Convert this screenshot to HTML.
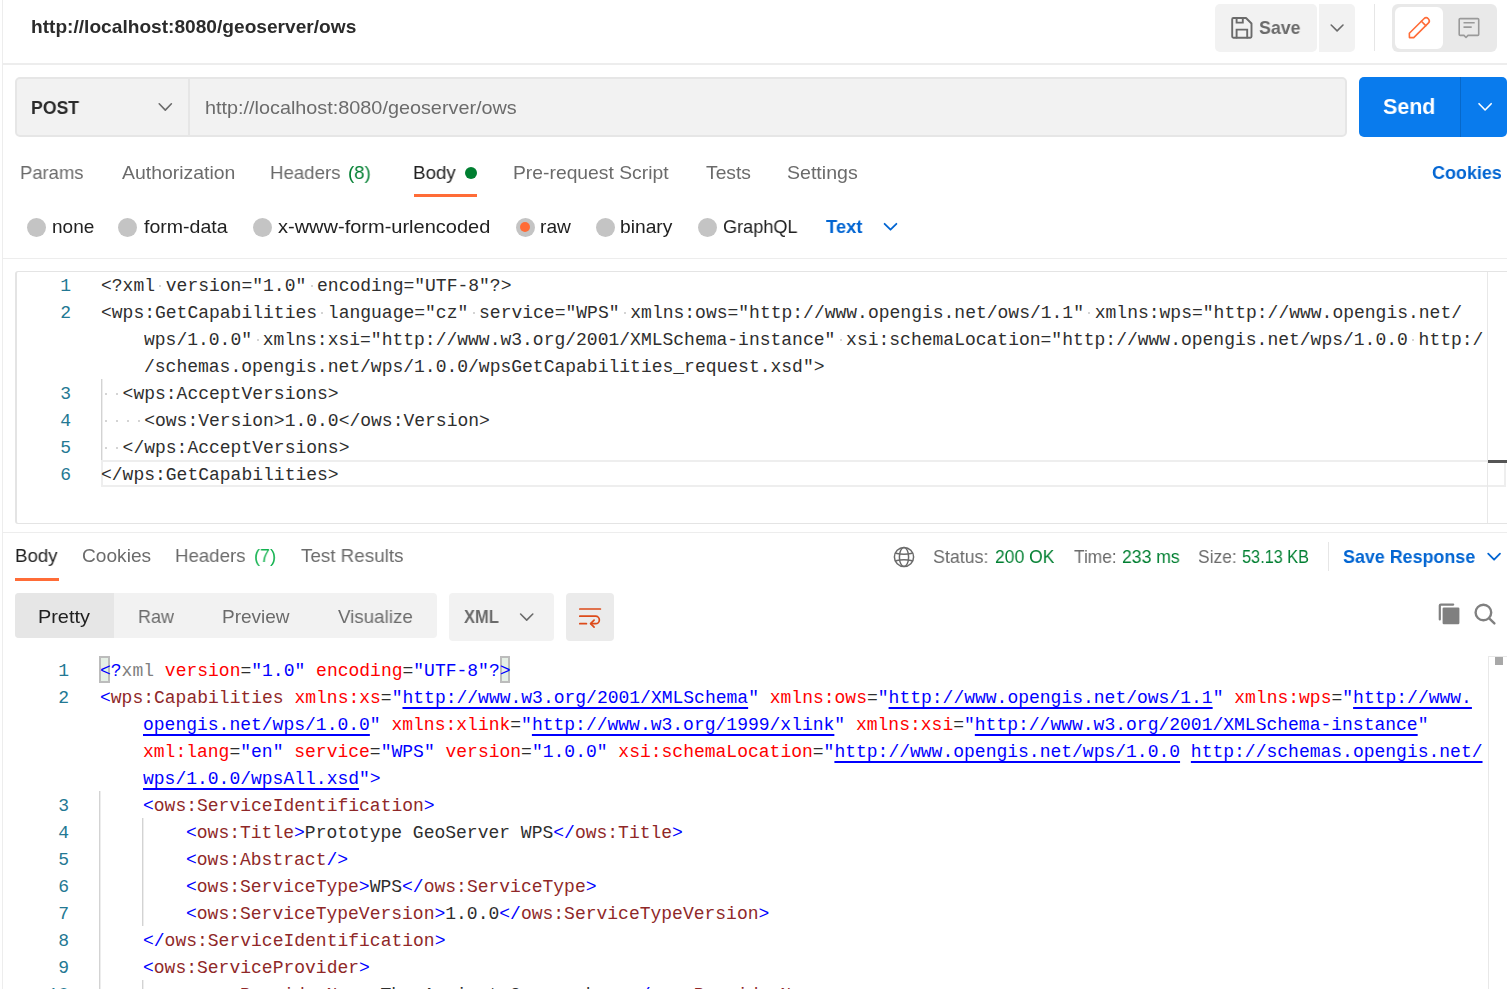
<!DOCTYPE html>
<html><head><meta charset="utf-8">
<style>
*{box-sizing:border-box;margin:0;padding:0}
html,body{width:1507px;height:989px;overflow:hidden;background:#fff}
body{position:relative;font-family:"Liberation Sans",sans-serif;color:#212121}
.a{position:absolute;white-space:pre;transform-origin:0 0}
.ln{position:absolute;height:1px;background:#ededed}
.vl{position:absolute;width:1px;background:#ededed}
.t{font-size:19px;line-height:24px;will-change:transform}
.g{color:#6b6b6b}
.grn{color:#007f31}
.blue{color:#0265d2}
.w{color:#fff}
.dk{color:#2b2b2b}
.grn2{color:#12b24f}
.code{font-family:"Liberation Mono",monospace;font-size:19px;line-height:27px}
.req,.res{transform:scaleX(0.947368)}
.lnum{color:#237893;transform:scaleX(0.947368);transform-origin:100% 0}
.req{color:#2e2e2e}
.dot{position:absolute;width:2px;height:2px;background:#d4d4d4}
.d{color:#0000ff}.tg{color:#8f2828}.at{color:#ff0000}.eq{color:#2e2e2e}.v{color:#0000ff}.lk{color:#0000ff;text-decoration:underline;text-underline-offset:4px;text-decoration-thickness:1.5px;text-decoration-skip-ink:none}.mt{color:#808080}.tx{color:#2e2e2e}
.guide{width:2px;background:linear-gradient(90deg,#d3d3d3 50%,#ededed 50%)}
.bm{border:2px solid #bcbcbc;background:#e6f0e6}
.radio{position:absolute;width:19.5px;height:19.5px;border-radius:50%;background:#c4c4c4}
</style></head><body>
<div class="vl" style="left:2px;top:0;height:989px"></div>

<!-- header -->
<div class="ln" style="left:3px;top:63px;width:1504px;height:2px"></div>

<!-- Save -->
<div class="a" style="left:1215px;top:4px;width:102px;height:48px;background:#f2f2f2;border-radius:5px"></div>
<div class="a" style="left:1319px;top:4px;width:36px;height:48px;background:#f2f2f2;border-radius:0 5px 5px 0"></div>
<div class="vl" style="left:1374px;top:4px;height:47px;background:#e6e6e6"></div>
<div class="a" style="left:1392px;top:4px;width:105px;height:48px;background:#e9e9e9;border-radius:6px"></div>
<div class="a" style="left:1395px;top:7px;width:48px;height:42px;background:#fff;border-radius:6px"></div>

<!-- URL bar -->
<div class="a" style="left:15px;top:77px;width:1332px;height:60px;background:#f2f2f2;border:2px solid #e6e6e6;border-radius:5px"></div>
<div class="vl" style="left:188px;top:78px;height:58px;width:2px;background:#e6e6e6"></div>
<div class="a" style="left:1359px;top:77px;width:148px;height:60px;background:#097bed;border-radius:5px"></div>
<div class="vl" style="left:1460px;top:77px;height:60px;background:#0768c9"></div>

<!-- tabs -->
<div class="a" style="left:465px;top:167px;width:12px;height:12px;border-radius:50%;background:#007f31"></div>
<div class="a" style="left:414px;top:194px;width:63px;height:3px;background:#ff6c37"></div>

<!-- radios -->
<div class="radio" style="left:26.5px;top:217.5px"></div>
<div class="radio" style="left:117.5px;top:217.5px"></div>
<div class="radio" style="left:252.5px;top:217.5px"></div>
<div class="radio" style="left:515.5px;top:217.5px"></div>
<div class="a" style="left:520px;top:222.3px;width:10px;height:10px;border-radius:50%;background:#ff6c37"></div>
<div class="radio" style="left:595.5px;top:217.5px"></div>
<div class="radio" style="left:697.5px;top:217.5px"></div>
<div class="ln" style="left:3px;top:258px;width:1504px"></div>

<!-- request editor -->
<div class="a" style="left:15px;top:271px;width:1500px;height:253px;border:1px solid #e4e4e4;border-left:2px solid #e4e4e4;border-radius:3px"></div>

<!-- reqcode:start -->
<div class="a" style="left:101px;top:460px;width:1405px;height:27px;border:2px solid #eeeeee"></div>
<div class="vl" style="left:1487px;top:272px;height:251px;background:#e8e8e8"></div>
<div class="a" style="left:1488px;top:460px;width:19px;height:3px;background:#555"></div>
<div class="a guide" style="left:101px;top:379px;height:81px"></div>
<div class="a code lnum" style="left:0;width:71px;text-align:right;top:273px">1</div>
<div class="dot" style="left:159.4px;top:285px"></div>
<div class="dot" style="left:310.6px;top:285px"></div>
<div class="a code req" style="left:101.0px;top:273px">&lt;?xml version="1.0" encoding="UTF-8"?&gt;</div>
<div class="a code lnum" style="left:0;width:71px;text-align:right;top:300px">2</div>
<div class="dot" style="left:321.4px;top:312px"></div>
<div class="dot" style="left:472.6px;top:312px"></div>
<div class="dot" style="left:623.8px;top:312px"></div>
<div class="dot" style="left:1088.2px;top:312px"></div>
<div class="a code req" style="left:101.0px;top:300px">&lt;wps:GetCapabilities language="cz" service="WPS" xmlns:ows="http://www.opengis.net/ows/1.1" xmlns:wps="http://www.opengis.net/</div>
<div class="dot" style="left:256.6px;top:339px"></div>
<div class="dot" style="left:839.8px;top:339px"></div>
<div class="dot" style="left:1412.2px;top:339px"></div>
<div class="a code req" style="left:144.2px;top:327px">wps/1.0.0" xmlns:xsi="http://www.w3.org/2001/XMLSchema-instance" xsi:schemaLocation="http://www.opengis.net/wps/1.0.0 http:/</div>
<div class="a code req" style="left:144.2px;top:354px">/schemas.opengis.net/wps/1.0.0/wpsGetCapabilities_request.xsd"&gt;</div>
<div class="a code lnum" style="left:0;width:71px;text-align:right;top:381px">3</div>
<div class="dot" style="left:105.4px;top:393px"></div>
<div class="dot" style="left:116.2px;top:393px"></div>
<div class="a code req" style="left:101.0px;top:381px">  &lt;wps:AcceptVersions&gt;</div>
<div class="a code lnum" style="left:0;width:71px;text-align:right;top:408px">4</div>
<div class="dot" style="left:105.4px;top:420px"></div>
<div class="dot" style="left:116.2px;top:420px"></div>
<div class="dot" style="left:127.0px;top:420px"></div>
<div class="dot" style="left:137.8px;top:420px"></div>
<div class="a code req" style="left:101.0px;top:408px">    &lt;ows:Version&gt;1.0.0&lt;/ows:Version&gt;</div>
<div class="a code lnum" style="left:0;width:71px;text-align:right;top:435px">5</div>
<div class="dot" style="left:105.4px;top:447px"></div>
<div class="dot" style="left:116.2px;top:447px"></div>
<div class="a code req" style="left:101.0px;top:435px">  &lt;/wps:AcceptVersions&gt;</div>
<div class="a code lnum" style="left:0;width:71px;text-align:right;top:462px">6</div>
<div class="a code req" style="left:101.0px;top:462px">&lt;/wps:GetCapabilities&gt;</div>
<!-- reqcode:end -->

<!-- response header -->
<div class="ln" style="left:3px;top:532px;width:1504px"></div>
<div class="a" style="left:15px;top:578px;width:44px;height:3px;background:#ff6c37"></div>

<div class="vl" style="left:1328px;top:542px;height:29px;background:#e6e6e6"></div>

<!-- response toolbar -->
<div class="a" style="left:15px;top:593px;width:422px;height:45px;background:#f2f2f2;border-radius:4px"></div>
<div class="a" style="left:15px;top:593px;width:99px;height:45px;background:#e6e6e6;border-radius:4px 0 0 4px"></div>
<div class="a" style="left:449px;top:593px;width:105px;height:48px;background:#f2f2f2;border-radius:4px"></div>
<div class="a" style="left:566px;top:593px;width:48px;height:48px;background:#ebebeb;border-radius:4px"></div>

<!-- rescode:start -->
<div class="vl" style="left:1488px;top:656px;height:333px;background:#e8e8e8"></div>
<div class="ln" style="left:1488px;top:656px;width:19px;background:#e8e8e8"></div>
<div class="a" style="left:1495px;top:657px;width:8px;height:8px;background:#a8a8a8"></div>
<div class="a bm" style="left:99px;top:656px;width:11px;height:27px"></div>
<div class="a bm" style="left:500px;top:656px;width:10px;height:27px"></div>
<div class="a guide" style="left:99px;top:791px;height:217px"></div>
<div class="a guide" style="left:142px;top:818px;height:108px"></div>
<div class="a guide" style="left:142px;top:980px;height:28px"></div>
<div class="a code lnum" style="left:0;width:69px;text-align:right;top:658px">1</div>
<div class="a code res" style="left:100.0px;top:658px"><span class="d">&lt;?</span><span class="mt">xml</span><span class="eq"> </span><span class="at">version</span><span class="eq">=</span><span class="v">"1.0"</span><span class="eq"> </span><span class="at">encoding</span><span class="eq">=</span><span class="v">"UTF-8"</span><span class="d">?&gt;</span></div>
<div class="a code lnum" style="left:0;width:69px;text-align:right;top:685px">2</div>
<div class="a code res" style="left:100.0px;top:685px"><span class="d">&lt;</span><span class="tg">wps:Capabilities</span><span class="eq"> </span><span class="at">xmlns:xs</span><span class="eq">=</span><span class="v">"</span><span class="lk">http://www.w3.org/2001/XMLSchema</span><span class="v">"</span><span class="eq"> </span><span class="at">xmlns:ows</span><span class="eq">=</span><span class="v">"</span><span class="lk">http://www.opengis.net/ows/1.1</span><span class="v">"</span><span class="eq"> </span><span class="at">xmlns:wps</span><span class="eq">=</span><span class="v">"</span><span class="lk">http://www.</span></div>
<div class="a code res" style="left:143.2px;top:712px"><span class="lk">opengis.net/wps/1.0.0</span><span class="v">"</span><span class="eq"> </span><span class="at">xmlns:xlink</span><span class="eq">=</span><span class="v">"</span><span class="lk">http://www.w3.org/1999/xlink</span><span class="v">"</span><span class="eq"> </span><span class="at">xmlns:xsi</span><span class="eq">=</span><span class="v">"</span><span class="lk">http://www.w3.org/2001/XMLSchema-instance</span><span class="v">"</span></div>
<div class="a code res" style="left:143.2px;top:739px"><span class="at">xml:lang</span><span class="eq">=</span><span class="v">"en"</span><span class="eq"> </span><span class="at">service</span><span class="eq">=</span><span class="v">"WPS"</span><span class="eq"> </span><span class="at">version</span><span class="eq">=</span><span class="v">"1.0.0"</span><span class="eq"> </span><span class="at">xsi:schemaLocation</span><span class="eq">=</span><span class="v">"</span><span class="lk">http://www.opengis.net/wps/1.0.0</span><span class="v"> </span><span class="lk">http://schemas.opengis.net/</span></div>
<div class="a code res" style="left:143.2px;top:766px"><span class="lk">wps/1.0.0/wpsAll.xsd</span><span class="v">"</span><span class="d">&gt;</span></div>
<div class="a code lnum" style="left:0;width:69px;text-align:right;top:793px">3</div>
<div class="a code res" style="left:143.2px;top:793px"><span class="d">&lt;</span><span class="tg">ows:ServiceIdentification</span><span class="d">&gt;</span></div>
<div class="a code lnum" style="left:0;width:69px;text-align:right;top:820px">4</div>
<div class="a code res" style="left:186.4px;top:820px"><span class="d">&lt;</span><span class="tg">ows:Title</span><span class="d">&gt;</span><span class="tx">Prototype GeoServer WPS</span><span class="d">&lt;/</span><span class="tg">ows:Title</span><span class="d">&gt;</span></div>
<div class="a code lnum" style="left:0;width:69px;text-align:right;top:847px">5</div>
<div class="a code res" style="left:186.4px;top:847px"><span class="d">&lt;</span><span class="tg">ows:Abstract</span><span class="d">/&gt;</span></div>
<div class="a code lnum" style="left:0;width:69px;text-align:right;top:874px">6</div>
<div class="a code res" style="left:186.4px;top:874px"><span class="d">&lt;</span><span class="tg">ows:ServiceType</span><span class="d">&gt;</span><span class="tx">WPS</span><span class="d">&lt;/</span><span class="tg">ows:ServiceType</span><span class="d">&gt;</span></div>
<div class="a code lnum" style="left:0;width:69px;text-align:right;top:901px">7</div>
<div class="a code res" style="left:186.4px;top:901px"><span class="d">&lt;</span><span class="tg">ows:ServiceTypeVersion</span><span class="d">&gt;</span><span class="tx">1.0.0</span><span class="d">&lt;/</span><span class="tg">ows:ServiceTypeVersion</span><span class="d">&gt;</span></div>
<div class="a code lnum" style="left:0;width:69px;text-align:right;top:928px">8</div>
<div class="a code res" style="left:143.2px;top:928px"><span class="d">&lt;/</span><span class="tg">ows:ServiceIdentification</span><span class="d">&gt;</span></div>
<div class="a code lnum" style="left:0;width:69px;text-align:right;top:955px">9</div>
<div class="a code res" style="left:143.2px;top:955px"><span class="d">&lt;</span><span class="tg">ows:ServiceProvider</span><span class="d">&gt;</span></div>
<div class="a code lnum" style="left:0;width:69px;text-align:right;top:982px">10</div>
<div class="a code res" style="left:186.4px;top:982px"><span class="d">&lt;</span><span class="tg">ows:ProviderName</span><span class="d">&gt;</span><span class="tx">The Ancient Geographers</span><span class="d">&lt;/</span><span class="tg">ows:ProviderName</span><span class="d">&gt;</span></div>
<!-- rescode:end -->

<!-- icons:start -->
<svg class="a" style="left:0;top:0" width="1507" height="989" viewBox="0 0 1507 989" fill="none" stroke-linecap="round" stroke-linejoin="round">
 <!-- floppy -->
 <path d="M1232.2 19.2a1.2 1.2 0 0 1 1.2-1.2h12.6l5.5 5.5v13a1.2 1.2 0 0 1-1.2 1.2h-16.9a1.2 1.2 0 0 1-1.2-1.2z" stroke="#6b6b6b" stroke-width="1.9"/>
 <path d="M1236.6 18v4.6h6.2v-4.6" stroke="#6b6b6b" stroke-width="1.9" stroke-linejoin="miter"/>
 <path d="M1236.6 37.6v-8h10.6v8" stroke="#6b6b6b" stroke-width="1.9" stroke-linejoin="miter"/>
 <!-- save chevron -->
 <path d="M1331.2 25l5.9 5.9 5.9-5.9" stroke="#6b6b6b" stroke-width="1.6"/>
 <!-- pencil -->
 <g transform="translate(1409 38) rotate(-45)" stroke="#ff6c37" stroke-width="1.6">
  <path d="M0.6 0 L3.6 -3.1 H24.2 A3.1 3.1 0 0 1 24.2 3.1 H3.6 Z"/>
  <path d="M20.6 -3.1 V3.1"/>
 </g>
 <!-- comment -->
 <path d="M1460.2 18.6h17.5a1 1 0 0 1 1 1v14.8a1 1 0 0 1-1 1h-9.7l-2 2.1-2-2.1h-3.8a1 1 0 0 1-1-1v-14.8a1 1 0 0 1 1-1z" stroke="#9a9a9a" stroke-width="1.6"/>
 <path d="M1463.5 22.8h11.2M1463.5 27.1h8.2" stroke="#9a9a9a" stroke-width="1.6" stroke-linecap="butt"/>
 <!-- POST chevron -->
 <path d="M159.2 103.8l6.1 6.3 6.1-6.3" stroke="#6b6b6b" stroke-width="1.6"/>
 <!-- Send chevron -->
 <path d="M1479 103.7l6.1 6.3 6.1-6.3" stroke="#fff" stroke-width="1.6"/>
 <!-- Text chevron -->
 <path d="M884.6 223.8l5.9 5.9 5.9-5.9" stroke="#0265d2" stroke-width="1.8"/>
 <!-- globe -->
 <g stroke="#6b6b6b" stroke-width="1.5">
  <circle cx="904" cy="557" r="9.6"/>
  <ellipse cx="904" cy="557" rx="4.6" ry="9.6"/>
  <path d="M895.8 553.2 Q904 555.4 912.2 553.2 M895.8 560.8 Q904 558.6 912.2 560.8"/>
 </g>
 <!-- save response chevron -->
 <path d="M1488.2 553.6l5.9 6.1 5.9-6.1" stroke="#0265d2" stroke-width="1.8"/>
 <!-- XML chevron -->
 <path d="M520.6 614l6.1 6.1 6.1-6.1" stroke="#6b6b6b" stroke-width="1.6"/>
 <!-- wrap icon -->
 <g stroke="#dd4b1a" stroke-width="1.7">
  <path d="M579.8 609h20.6"/>
  <path d="M579.8 616.2h15.8a3.7 3.7 0 0 1 0 7.5h-4.8"/>
  <path d="M594.1 620.2l-3.5 3.5 3.5 3.5"/>
  <path d="M579.8 623.7h6.6"/>
 </g>
 <!-- copy -->
 <path d="M1439.8 619.4v-13.8a1 1 0 0 1 1-1h12.4" stroke="#808080" stroke-width="2.2"/>
 <rect x="1442.6" y="607.6" width="16.8" height="16.6" rx="1.2" fill="#808080"/>
 <!-- search -->
 <circle cx="1483.4" cy="612.5" r="7.8" stroke="#808080" stroke-width="2.4"/>
 <path d="M1489.2 618.4l5.2 5" stroke="#808080" stroke-width="2.4"/>
</svg>
<!-- icons:end -->
<!-- texts:start -->
<div id="title" class="a t dk" style="left:31.00px;top:15.40px;font-size:19.00px;font-weight:700;transform:scaleX(1.0068)">http://localhost:8080/geoserver/ows</div>
<div id="save" class="a t g" style="left:1259.40px;top:16.40px;font-size:19.00px;font-weight:700;transform:scaleX(0.9357)">Save</div>
<div id="post" class="a t dk" style="left:31.00px;top:96.00px;font-size:19.00px;font-weight:700;transform:scaleX(0.9299)">POST</div>
<div id="url" class="a t g" style="left:204.60px;top:95.80px;font-size:19.00px;transform:scaleX(1.0430)">http://localhost:8080/geoserver/ows</div>
<div id="send" class="a t w" style="left:1382.80px;top:94.80px;font-size:22.00px;font-weight:700;transform:scaleX(0.9736)">Send</div>
<div id="params" class="a t g" style="left:20.00px;top:161.00px;font-size:19.00px;transform:scaleX(0.9691)">Params</div>
<div id="auth" class="a t g" style="left:121.80px;top:161.00px;font-size:19.00px;transform:scaleX(1.0219)">Authorization</div>
<div id="headers8" class="a t g" style="left:270.00px;top:161.00px;font-size:19.00px;transform:scaleX(0.9823)">Headers</div>
<div id="h8" class="a t grn" style="left:348.40px;top:161.00px;font-size:19.00px;transform:scaleX(0.9771)">(8)</div>
<div id="body" class="a t " style="left:413.00px;top:161.00px;font-size:19.00px;transform:scaleX(0.9865)">Body</div>
<div id="prereq" class="a t g" style="left:512.60px;top:161.00px;font-size:19.00px;transform:scaleX(1.0159)">Pre-request Script</div>
<div id="tests" class="a t g" style="left:706.00px;top:161.00px;font-size:19.00px;transform:scaleX(1.0147)">Tests</div>
<div id="settings" class="a t g" style="left:787.00px;top:161.00px;font-size:19.00px;transform:scaleX(1.0299)">Settings</div>
<div id="cookies" class="a t blue" style="left:1432.00px;top:161.00px;font-size:19.00px;font-weight:700;transform:scaleX(0.9452)">Cookies</div>
<div id="none" class="a t " style="left:51.60px;top:215.00px;font-size:19.00px;transform:scaleX(0.9959)">none</div>
<div id="formdata" class="a t " style="left:144.00px;top:215.00px;font-size:19.00px;transform:scaleX(1.0271)">form-data</div>
<div id="xwww" class="a t " style="left:278.20px;top:215.00px;font-size:19.00px;transform:scaleX(1.0528)">x-www-form-urlencoded</div>
<div id="raw" class="a t " style="left:539.80px;top:215.00px;font-size:19.00px;transform:scaleX(1.0081)">raw</div>
<div id="binary" class="a t " style="left:620.00px;top:215.00px;font-size:19.00px;transform:scaleX(1.0121)">binary</div>
<div id="graphql" class="a t " style="left:723.00px;top:215.00px;font-size:19.00px;transform:scaleX(0.9540)">GraphQL</div>
<div id="text" class="a t blue" style="left:826.00px;top:215.00px;font-size:19.00px;font-weight:700;transform:scaleX(0.9688)">Text</div>
<div id="rbody" class="a t " style="left:15.00px;top:544.00px;font-size:19.00px;transform:scaleX(0.9823)">Body</div>
<div id="rcookies" class="a t g" style="left:82.00px;top:544.00px;font-size:19.00px;transform:scaleX(1.0062)">Cookies</div>
<div id="rheaders" class="a t g" style="left:175.00px;top:544.00px;font-size:19.00px;transform:scaleX(0.9823)">Headers</div>
<div id="h7" class="a t grn2" style="left:253.80px;top:544.00px;font-size:19.00px;transform:scaleX(0.9457)">(7)</div>
<div id="rtest" class="a t g" style="left:301.00px;top:544.00px;font-size:19.00px;transform:scaleX(0.9903)">Test Results</div>
<div id="status" class="a t g" style="left:933.00px;top:545.00px;font-size:19.00px;transform:scaleX(0.9389)">Status:</div>
<div id="s200" class="a t grn" style="left:995.00px;top:545.00px;font-size:19.00px;transform:scaleX(0.9219)">200 OK</div>
<div id="time" class="a t g" style="left:1074.00px;top:545.00px;font-size:19.00px;transform:scaleX(0.9111)">Time:</div>
<div id="t233" class="a t grn" style="left:1122.00px;top:545.00px;font-size:19.00px;transform:scaleX(0.9261)">233 ms</div>
<div id="size" class="a t g" style="left:1197.80px;top:545.00px;font-size:19.00px;transform:scaleX(0.9133)">Size:</div>
<div id="s53" class="a t grn" style="left:1242.00px;top:545.00px;font-size:19.00px;transform:scaleX(0.8567)">53.13 KB</div>
<div id="saveresp" class="a t blue" style="left:1343.00px;top:545.00px;font-size:19.00px;font-weight:700;transform:scaleX(0.9411)">Save Response</div>
<div id="pretty" class="a t " style="left:38.40px;top:605.00px;font-size:19.00px;transform:scaleX(1.0459)">Pretty</div>
<div id="rraw" class="a t g" style="left:137.60px;top:605.00px;font-size:19.00px;transform:scaleX(0.9471)">Raw</div>
<div id="preview" class="a t g" style="left:222.00px;top:605.00px;font-size:19.00px;transform:scaleX(0.9973)">Preview</div>
<div id="visualize" class="a t g" style="left:338.00px;top:605.00px;font-size:19.00px;transform:scaleX(0.9874)">Visualize</div>
<div id="xml" class="a t g" style="left:464.20px;top:605.00px;font-size:17.60px;font-weight:700;transform:scaleX(0.9360)">XML</div>
<!-- texts:end -->
</body></html>
